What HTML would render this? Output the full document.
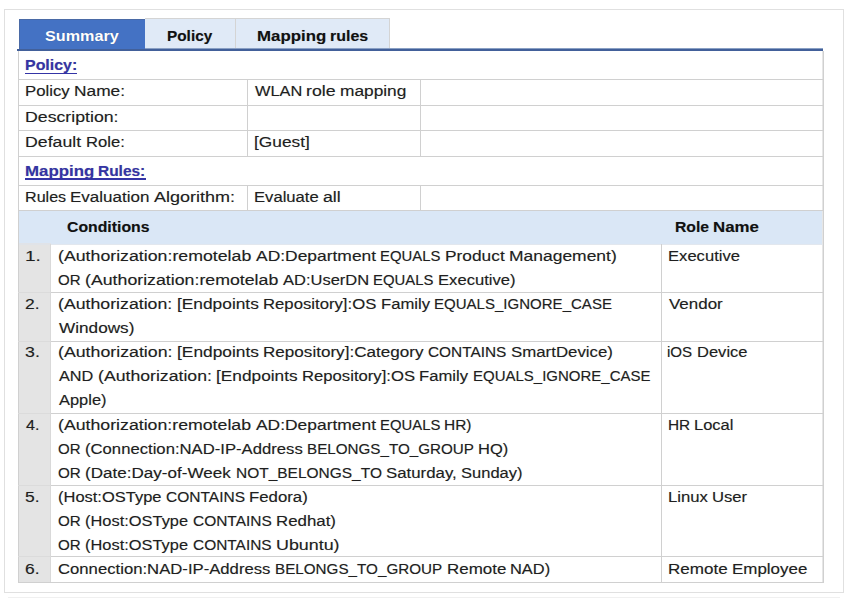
<!DOCTYPE html>
<html><head><meta charset="utf-8"><style>
html,body{margin:0;padding:0;}
body{width:852px;height:598px;background:#fff;position:relative;overflow:hidden;font-family:"Liberation Sans",sans-serif;}
.b{position:absolute;box-sizing:border-box;}
.t{position:absolute;font-size:15.2px;line-height:20px;white-space:pre;transform-origin:0 0;text-shadow:0 0 0.7px rgba(0,0,0,0.3);}
</style></head><body>
<div class="b" style="left:4px;top:9px;width:840px;height:584px;border:1px solid #e0e0e0"></div>
<div class="b" style="left:8px;top:597px;width:832px;height:1px;background:#f0f0f0"></div>
<div class="b" style="left:19px;top:19px;width:126px;height:30px;background:#4a6aa6"></div>
<div class="b" style="left:20px;top:20px;width:125px;height:29px;background:#4472c4"></div>
<div class="b" style="left:145px;top:18px;width:91px;height:31px;background:#d4d4d4"></div>
<div class="b" style="left:145px;top:19px;width:90px;height:30px;background:#e0eaf7"></div>
<div class="b" style="left:236px;top:18px;width:154px;height:31px;background:#d4d4d4"></div>
<div class="b" style="left:236px;top:19px;width:153px;height:30px;background:#e0eaf7"></div>
<div class="b" style="left:145px;top:48px;width:678px;height:1px;background:#8aa0c4"></div>
<div class="b" style="left:17px;top:49px;width:806px;height:2px;background:#42609a"></div>
<div class="b" style="left:18px;top:51px;width:1px;height:532px;background:#d0d0d0"></div>
<div class="b" style="left:822px;top:51px;width:1px;height:532px;background:#e6e6e6"></div>
<div class="b" style="left:823px;top:51px;width:1px;height:532px;background:#d0d0d0"></div>
<div class="b" style="left:18px;top:582px;width:806px;height:1px;background:#d0d0d0"></div>
<div class="b" style="left:19px;top:210px;width:803px;height:35px;background:#dae7f6"></div>
<div class="b" style="left:19px;top:245px;width:32px;height:337px;background:#e4e4e4"></div>
<div class="b" style="left:18px;top:79px;width:805px;height:1px;background:#d0d0d0"></div>
<div class="b" style="left:18px;top:105px;width:805px;height:1px;background:#d0d0d0"></div>
<div class="b" style="left:18px;top:130px;width:805px;height:1px;background:#d0d0d0"></div>
<div class="b" style="left:18px;top:156px;width:805px;height:1px;background:#d0d0d0"></div>
<div class="b" style="left:18px;top:185px;width:805px;height:1px;background:#d0d0d0"></div>
<div class="b" style="left:18px;top:210px;width:805px;height:1px;background:#d0d0d0"></div>
<div class="b" style="left:51px;top:244px;width:772px;height:1px;background:#e2e7ee"></div>
<div class="b" style="left:19px;top:243px;width:32px;height:2px;background:#e0e3e8"></div>
<div class="b" style="left:51px;top:292px;width:772px;height:1px;background:#d0d0d0"></div>
<div class="b" style="left:18px;top:292px;width:33px;height:1px;background:#dbdbdb"></div>
<div class="b" style="left:51px;top:341px;width:772px;height:1px;background:#d0d0d0"></div>
<div class="b" style="left:18px;top:341px;width:33px;height:1px;background:#dbdbdb"></div>
<div class="b" style="left:51px;top:413px;width:772px;height:1px;background:#d0d0d0"></div>
<div class="b" style="left:18px;top:413px;width:33px;height:1px;background:#dbdbdb"></div>
<div class="b" style="left:51px;top:485px;width:772px;height:1px;background:#d0d0d0"></div>
<div class="b" style="left:18px;top:485px;width:33px;height:1px;background:#dbdbdb"></div>
<div class="b" style="left:51px;top:556px;width:772px;height:1px;background:#d0d0d0"></div>
<div class="b" style="left:18px;top:556px;width:33px;height:1px;background:#dbdbdb"></div>
<div class="b" style="left:247px;top:79px;width:1px;height:77px;background:#d0d0d0"></div>
<div class="b" style="left:247px;top:185px;width:1px;height:25px;background:#d0d0d0"></div>
<div class="b" style="left:420px;top:79px;width:1px;height:77px;background:#d0d0d0"></div>
<div class="b" style="left:420px;top:185px;width:1px;height:25px;background:#d0d0d0"></div>
<div class="b" style="left:661px;top:244px;width:1px;height:338px;background:#d0d0d0"></div>
<div class="b" style="left:50px;top:244px;width:1px;height:338px;background:#d9d9d9"></div>
<div class="t" style="left:44.65px;top:26.00px;font-weight:bold;color:#ffffff;transform:scaleX(1.0654)">Summary</div>
<div class="t" style="left:166.51px;top:26.00px;font-weight:bold;color:#111111;transform:scaleX(1.0112)">Policy</div>
<div class="t" style="left:256.70px;top:26.00px;font-weight:bold;color:#111111;transform:scaleX(1.1086)">Mapping</div>
<div class="t" style="left:330.17px;top:26.00px;font-weight:bold;color:#111111;transform:scaleX(1.0520)">rules</div>
<div class="b" style="left:24.87px;top:72.70px;width:52.28px;height:1.8px;background:#3434a6"></div>
<div class="t" style="left:24.87px;top:55.40px;font-weight:bold;color:#3434a6;transform:scaleX(1.0495)">Policy:</div>
<div class="t" style="left:25.29px;top:80.80px;font-weight:normal;color:#1f1f1f;transform:scaleX(1.1043)">Policy</div>
<div class="t" style="left:74.33px;top:80.80px;font-weight:normal;color:#1f1f1f;transform:scaleX(1.1402)">Name:</div>
<div class="t" style="left:254.50px;top:80.80px;font-weight:normal;color:#1f1f1f;transform:scaleX(1.0783)">WLAN</div>
<div class="t" style="left:306.06px;top:80.80px;font-weight:normal;color:#1f1f1f;transform:scaleX(1.1701)">role</div>
<div class="t" style="left:339.94px;top:80.80px;font-weight:normal;color:#1f1f1f;transform:scaleX(1.1392)">mapping</div>
<div class="t" style="left:25.28px;top:106.60px;font-weight:normal;color:#1f1f1f;transform:scaleX(1.1663)">Description:</div>
<div class="t" style="left:25.29px;top:132.00px;font-weight:normal;color:#1f1f1f;transform:scaleX(1.1663)">Default</div>
<div class="t" style="left:85.72px;top:132.00px;font-weight:normal;color:#1f1f1f;transform:scaleX(1.0937)">Role:</div>
<div class="t" style="left:253.50px;top:132.00px;font-weight:normal;color:#1f1f1f;transform:scaleX(1.1389)">[Guest]</div>
<div class="b" style="left:24.90px;top:178.40px;width:120.81px;height:1.8px;background:#3434a6"></div>
<div class="t" style="left:24.90px;top:161.10px;font-weight:bold;color:#3434a6;transform:scaleX(1.1096)">Mapping</div>
<div class="t" style="left:98.43px;top:161.10px;font-weight:bold;color:#3434a6;transform:scaleX(1.0185)">Rules:</div>
<div class="t" style="left:24.99px;top:186.80px;font-weight:normal;color:#1f1f1f;transform:scaleX(1.0603)">Rules</div>
<div class="t" style="left:70.45px;top:186.80px;font-weight:normal;color:#1f1f1f;transform:scaleX(1.1194)">Evaluation</div>
<div class="t" style="left:154.13px;top:186.80px;font-weight:normal;color:#1f1f1f;transform:scaleX(1.1857)">Algorithm:</div>
<div class="t" style="left:253.89px;top:186.80px;font-weight:normal;color:#1f1f1f;transform:scaleX(1.0955)">Evaluate</div>
<div class="t" style="left:322.93px;top:186.80px;font-weight:normal;color:#1f1f1f;transform:scaleX(1.1659)">all</div>
<div class="t" style="left:66.80px;top:217.20px;font-weight:bold;color:#111111;transform:scaleX(1.0399)">Conditions</div>
<div class="t" style="left:674.61px;top:216.80px;font-weight:bold;color:#111111;transform:scaleX(1.0365)">Role</div>
<div class="t" style="left:712.95px;top:216.80px;font-weight:bold;color:#111111;transform:scaleX(1.1115)">Name</div>
<div class="t" style="left:25.21px;top:246.20px;font-weight:normal;color:#1f1f1f;transform:scaleX(1.2561)">1.</div>
<div class="t" style="left:58.40px;top:246.20px;font-weight:normal;color:#1f1f1f;transform:scaleX(1.1681)">(Authorization:remotelab</div>
<div class="t" style="left:255.94px;top:246.20px;font-weight:normal;color:#1f1f1f;transform:scaleX(1.1477)">AD:Department</div>
<div class="t" style="left:380.33px;top:246.20px;font-weight:normal;color:#1f1f1f;transform:scaleX(0.9806)">EQUALS</div>
<div class="t" style="left:445.01px;top:246.20px;font-weight:normal;color:#1f1f1f;transform:scaleX(1.1404)">Product</div>
<div class="t" style="left:508.95px;top:246.20px;font-weight:normal;color:#1f1f1f;transform:scaleX(1.1498)">Management)</div>
<div class="t" style="left:58.40px;top:270.20px;font-weight:normal;color:#1f1f1f;transform:scaleX(0.9913)">OR</div>
<div class="t" style="left:85.23px;top:270.20px;font-weight:normal;color:#1f1f1f;transform:scaleX(1.1680)">(Authorization:remotelab</div>
<div class="t" style="left:282.75px;top:270.20px;font-weight:normal;color:#1f1f1f;transform:scaleX(1.0869)">AD:UserDN</div>
<div class="t" style="left:373.22px;top:270.20px;font-weight:normal;color:#1f1f1f;transform:scaleX(0.9804)">EQUALS</div>
<div class="t" style="left:437.89px;top:270.20px;font-weight:normal;color:#1f1f1f;transform:scaleX(1.0943)">Executive)</div>
<div class="t" style="left:667.80px;top:246.20px;font-weight:normal;color:#1f1f1f;transform:scaleX(1.0934)">Executive</div>
<div class="t" style="left:25.38px;top:294.00px;font-weight:normal;color:#1f1f1f;transform:scaleX(1.1514)">2.</div>
<div class="t" style="left:58.40px;top:294.00px;font-weight:normal;color:#1f1f1f;transform:scaleX(1.1663)">(Authorization:</div>
<div class="t" style="left:176.87px;top:294.00px;font-weight:normal;color:#1f1f1f;transform:scaleX(1.1402)">[Endpoints</div>
<div class="t" style="left:262.97px;top:294.00px;font-weight:normal;color:#1f1f1f;transform:scaleX(1.1003)">Repository]:OS</div>
<div class="t" style="left:380.53px;top:294.00px;font-weight:normal;color:#1f1f1f;transform:scaleX(1.0981)">Family</div>
<div class="t" style="left:433.89px;top:294.00px;font-weight:normal;color:#1f1f1f;transform:scaleX(0.9897)">EQUALS_IGNORE_CASE</div>
<div class="t" style="left:59.20px;top:318.00px;font-weight:normal;color:#1f1f1f;transform:scaleX(1.1308)">Windows)</div>
<div class="t" style="left:669.20px;top:294.00px;font-weight:normal;color:#1f1f1f;transform:scaleX(1.1159)">Vendor</div>
<div class="t" style="left:25.16px;top:342.40px;font-weight:normal;color:#1f1f1f;transform:scaleX(1.1701)">3.</div>
<div class="t" style="left:58.40px;top:342.40px;font-weight:normal;color:#1f1f1f;transform:scaleX(1.1688)">(Authorization:</div>
<div class="t" style="left:177.13px;top:342.40px;font-weight:normal;color:#1f1f1f;transform:scaleX(1.1427)">[Endpoints</div>
<div class="t" style="left:263.41px;top:342.40px;font-weight:normal;color:#1f1f1f;transform:scaleX(1.1249)">Repository]:Category</div>
<div class="t" style="left:428.16px;top:342.40px;font-weight:normal;color:#1f1f1f;transform:scaleX(1.0133)">CONTAINS</div>
<div class="t" style="left:510.81px;top:342.40px;font-weight:normal;color:#1f1f1f;transform:scaleX(1.1085)">SmartDevice)</div>
<div class="t" style="left:59.40px;top:366.40px;font-weight:normal;color:#1f1f1f;transform:scaleX(1.0714)">AND</div>
<div class="t" style="left:98.01px;top:366.40px;font-weight:normal;color:#1f1f1f;transform:scaleX(1.1634)">(Authorization:</div>
<div class="t" style="left:216.18px;top:366.40px;font-weight:normal;color:#1f1f1f;transform:scaleX(1.1373)">[Endpoints</div>
<div class="t" style="left:302.06px;top:366.40px;font-weight:normal;color:#1f1f1f;transform:scaleX(1.0976)">Repository]:OS</div>
<div class="t" style="left:419.33px;top:366.40px;font-weight:normal;color:#1f1f1f;transform:scaleX(1.0954)">Family</div>
<div class="t" style="left:472.55px;top:366.40px;font-weight:normal;color:#1f1f1f;transform:scaleX(0.9872)">EQUALS_IGNORE_CASE</div>
<div class="t" style="left:59.40px;top:390.40px;font-weight:normal;color:#1f1f1f;transform:scaleX(1.0816)">Apple)</div>
<div class="t" style="left:667.41px;top:342.40px;font-weight:normal;color:#1f1f1f;transform:scaleX(0.9943)">iOS</div>
<div class="t" style="left:696.82px;top:342.40px;font-weight:normal;color:#1f1f1f;transform:scaleX(1.0877)">Device</div>
<div class="t" style="left:26.40px;top:415.30px;font-weight:normal;color:#1f1f1f;transform:scaleX(1.0628)">4.</div>
<div class="t" style="left:58.40px;top:415.30px;font-weight:normal;color:#1f1f1f;transform:scaleX(1.1666)">(Authorization:remotelab</div>
<div class="t" style="left:255.68px;top:415.30px;font-weight:normal;color:#1f1f1f;transform:scaleX(1.1462)">AD:Department</div>
<div class="t" style="left:379.90px;top:415.30px;font-weight:normal;color:#1f1f1f;transform:scaleX(0.9793)">EQUALS</div>
<div class="t" style="left:444.49px;top:415.30px;font-weight:normal;color:#1f1f1f;transform:scaleX(1.0187)">HR)</div>
<div class="t" style="left:58.40px;top:439.30px;font-weight:normal;color:#1f1f1f;transform:scaleX(0.9891)">OR</div>
<div class="t" style="left:85.18px;top:439.30px;font-weight:normal;color:#1f1f1f;transform:scaleX(1.0979)">(Connection:NAD-IP-Address</div>
<div class="t" style="left:307.20px;top:439.30px;font-weight:normal;color:#1f1f1f;transform:scaleX(1.0008)">BELONGS_TO_GROUP</div>
<div class="t" style="left:478.42px;top:439.30px;font-weight:normal;color:#1f1f1f;transform:scaleX(1.0837)">HQ)</div>
<div class="t" style="left:58.39px;top:463.30px;font-weight:normal;color:#1f1f1f;transform:scaleX(1.0008)">OR</div>
<div class="t" style="left:85.48px;top:463.30px;font-weight:normal;color:#1f1f1f;transform:scaleX(1.1238)">(Date:Day-of-Week</div>
<div class="t" style="left:235.54px;top:463.30px;font-weight:normal;color:#1f1f1f;transform:scaleX(1.0191)">NOT_BELONGS_TO</div>
<div class="t" style="left:385.77px;top:463.30px;font-weight:normal;color:#1f1f1f;transform:scaleX(1.1079)">Saturday,</div>
<div class="t" style="left:460.85px;top:463.30px;font-weight:normal;color:#1f1f1f;transform:scaleX(1.0877)">Sunday)</div>
<div class="t" style="left:667.58px;top:415.30px;font-weight:normal;color:#1f1f1f;transform:scaleX(1.0138)">HR</div>
<div class="t" style="left:694.15px;top:415.30px;font-weight:normal;color:#1f1f1f;transform:scaleX(1.0871)">Local</div>
<div class="t" style="left:25.38px;top:487.20px;font-weight:normal;color:#1f1f1f;transform:scaleX(1.1514)">5.</div>
<div class="t" style="left:58.39px;top:487.20px;font-weight:normal;color:#1f1f1f;transform:scaleX(1.0847)">(Host:OSType</div>
<div class="t" style="left:166.14px;top:487.20px;font-weight:normal;color:#1f1f1f;transform:scaleX(1.0214)">CONTAINS</div>
<div class="t" style="left:249.45px;top:487.20px;font-weight:normal;color:#1f1f1f;transform:scaleX(1.1047)">Fedora)</div>
<div class="t" style="left:58.39px;top:511.20px;font-weight:normal;color:#1f1f1f;transform:scaleX(0.9976)">OR</div>
<div class="t" style="left:85.40px;top:511.20px;font-weight:normal;color:#1f1f1f;transform:scaleX(1.0813)">(Host:OSType</div>
<div class="t" style="left:192.80px;top:511.20px;font-weight:normal;color:#1f1f1f;transform:scaleX(1.0182)">CONTAINS</div>
<div class="t" style="left:275.84px;top:511.20px;font-weight:normal;color:#1f1f1f;transform:scaleX(1.1102)">Redhat)</div>
<div class="t" style="left:58.39px;top:535.20px;font-weight:normal;color:#1f1f1f;transform:scaleX(0.9965)">OR</div>
<div class="t" style="left:85.37px;top:535.20px;font-weight:normal;color:#1f1f1f;transform:scaleX(1.0800)">(Host:OSType</div>
<div class="t" style="left:192.65px;top:535.20px;font-weight:normal;color:#1f1f1f;transform:scaleX(1.0170)">CONTAINS</div>
<div class="t" style="left:275.60px;top:535.20px;font-weight:normal;color:#1f1f1f;transform:scaleX(1.1755)">Ubuntu)</div>
<div class="t" style="left:667.60px;top:487.20px;font-weight:normal;color:#1f1f1f;transform:scaleX(1.0997)">Linux</div>
<div class="t" style="left:711.78px;top:487.20px;font-weight:normal;color:#1f1f1f;transform:scaleX(1.0960)">User</div>
<div class="t" style="left:25.38px;top:559.10px;font-weight:normal;color:#1f1f1f;transform:scaleX(1.1514)">6.</div>
<div class="t" style="left:58.40px;top:559.10px;font-weight:normal;color:#1f1f1f;transform:scaleX(1.0990)">Connection:NAD-IP-Address</div>
<div class="t" style="left:275.09px;top:559.10px;font-weight:normal;color:#1f1f1f;transform:scaleX(1.0024)">BELONGS_TO_GROUP</div>
<div class="t" style="left:446.59px;top:559.10px;font-weight:normal;color:#1f1f1f;transform:scaleX(1.1165)">Remote</div>
<div class="t" style="left:510.22px;top:559.10px;font-weight:normal;color:#1f1f1f;transform:scaleX(1.0808)">NAD)</div>
<div class="t" style="left:667.59px;top:559.10px;font-weight:normal;color:#1f1f1f;transform:scaleX(1.1234)">Remote</div>
<div class="t" style="left:731.62px;top:559.10px;font-weight:normal;color:#1f1f1f;transform:scaleX(1.1159)">Employee</div>
</body></html>
